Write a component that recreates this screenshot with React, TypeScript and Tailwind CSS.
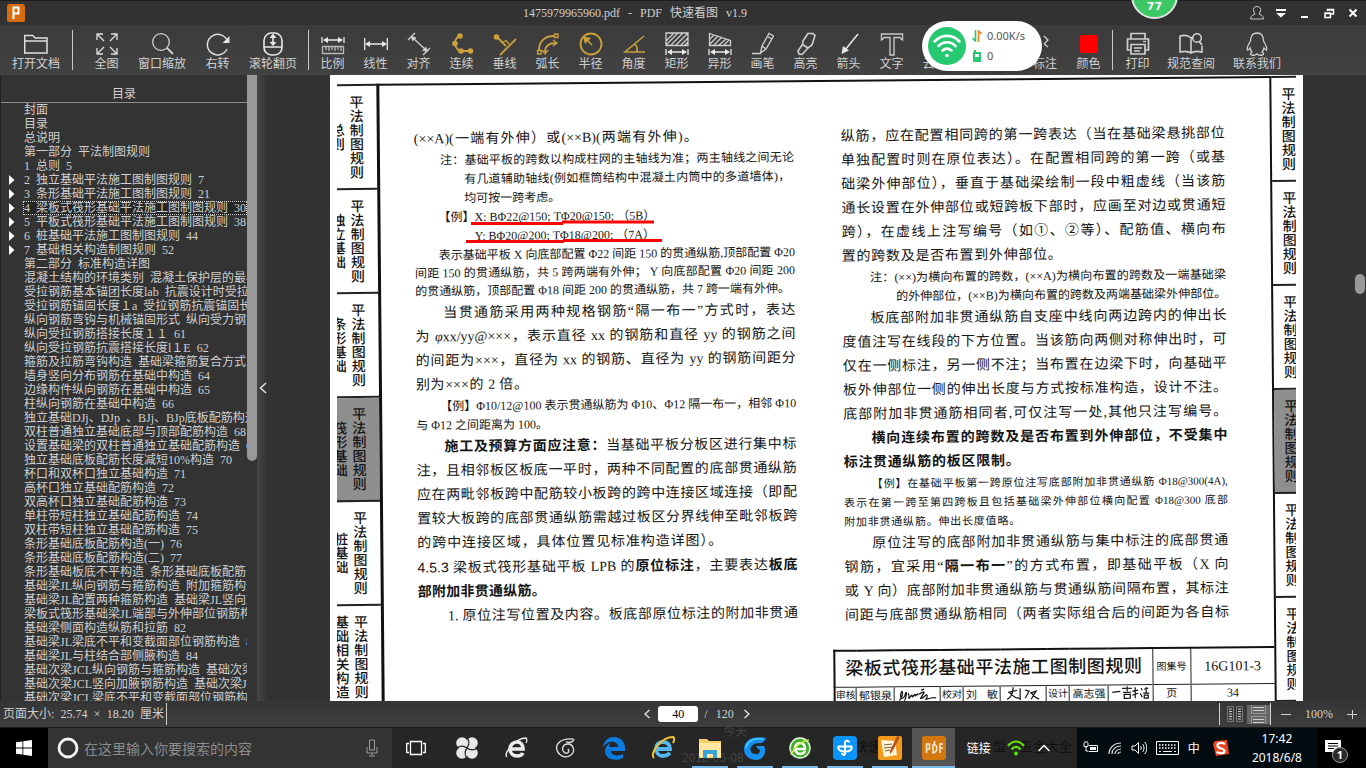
import type { ReactNode } from 'react';
import { clsx } from 'clsx';

const uiFont = "font-['Liberation_Serif','Noto_Sans_CJK_SC',sans-serif]";
const gold = '#c9a03c';

function Glyph({ children, color = '#d0d0d0' }: { children: ReactNode; color?: string }) {
  return (
    <svg className="h-6 w-6 shrink-0" viewBox="0 0 24 24" fill="none" stroke={color} strokeWidth={1.3} aria-hidden>
      {children}
    </svg>
  );
}

const dimension = (y: number) => (
  <>
    <path d={`M1 ${y - 3}v6M23 ${y - 3}v6M3 ${y}h18`} stroke="#e8e8e8" />
    <path d={`M2 ${y}l5-3v6zM22 ${y}l-5-3v6z`} fill="#e8e8e8" stroke="none" />
  </>
);

type Tool = { label: string; icon: ReactNode; wide?: boolean };

const viewTools: Tool[] = [
  {
    label: '全图',
    icon: (
      <Glyph color="#e0e0e0">
        <path d="M2 8V2h6M16 2h6v6M22 16v6h-6M8 22H2v-6M3 3l6 6M21 3l-6 6M21 21l-6-6M3 21l6-6" />
      </Glyph>
    ),
  },
  {
    label: '窗口缩放',
    wide: true,
    icon: (
      <Glyph>
        <circle cx="11" cy="10" r="8.3" />
        <path d="M17 16l6 6" strokeWidth={1.8} />
      </Glyph>
    ),
  },
  {
    label: '右转',
    icon: (
      <Glyph color="#e0e0e0">
        <path d="M21.5 9.5A10.3 10.3 0 1 0 21 17" strokeWidth={1.5} />
        <path d="M23.500 4v7h-7z" fill="#e0e0e0" stroke="none" />
      </Glyph>
    ),
  },
  {
    label: '滚轮翻页',
    wide: true,
    icon: (
      <Glyph color="#e8e8e8">
        <rect x="3" y="1" width="18" height="22" rx="7.500" strokeWidth={1.6} />
        <path d="M3 15h18M12 4v9" strokeWidth={1.6} />
        <path d="M12 1.500l3.500 4.500h-7zM12 14l3.500-4h-7z" fill="#e8e8e8" stroke="none" />
      </Glyph>
    ),
  },
];

const drawTools: Tool[] = [
  {
    label: '比例',
    icon: (
      <Glyph color="#b8b8b8">
        {dimension(8)}
        <path d="M1.500 14.500h21v7h-21zM5 15v3M8 15v4M11 15v3M14 15v4M17 15v3M20 15v4" />
      </Glyph>
    ),
  },
  {
    label: '线性',
    icon: (
      <Glyph color="#e8e8e8">
        <path d="M.700 6v12M23.300 6v12M2 12h20" />
        <path d="M1 12l5-3v6zM23 12l-5-3v6z" fill="#e8e8e8" stroke="none" />
      </Glyph>
    ),
  },
  {
    label: '对齐',
    icon: (
      <Glyph>
        <path d="M1 8l7-7M16 23l7-7M5 5l15 14" />
        <path d="M3.500 4l6 1.500-4 4zM21 20l-6-1.500 4-4z" fill="#d0d0d0" stroke="none" />
      </Glyph>
    ),
  },
  {
    label: '连续',
    icon: (
      <Glyph color={gold}>
        <path d="M9 4C4 8 3 13 9 19h11" strokeWidth={1.8} />
        <g fill={gold} stroke="none">
          <circle cx="10" cy="4" r="2.800" />
          <circle cx="5" cy="11.500" r="2.800" />
          <circle cx="11" cy="19" r="2.800" />
          <circle cx="20.500" cy="19" r="2.800" />
        </g>
      </Glyph>
    ),
  },
  {
    label: '垂线',
    icon: (
      <Glyph color={gold}>
        <path d="M4 5l9 9M7 23L23 7" strokeWidth={1.8} />
        <path d="M9 10.500l4-2 3 3.500" />
        <circle cx="3.500" cy="5" r="2.800" fill={gold} stroke="none" />
      </Glyph>
    ),
  },
  {
    label: '弧长',
    icon: (
      <Glyph color={gold}>
        <path d="M3 18C3 9 9 4 18 4M9 20c0-6 4-9 11-9" strokeWidth={1.800} />
        <path d="M1.500 18.500h3.500v3.500H1.500zM18.500 2H22v3.500h-3.500zM6 18l3 4 3-4M17 8l4 3-4 3" />
      </Glyph>
    ),
  },
  {
    label: '半径',
    icon: (
      <Glyph color={gold}>
        <circle cx="12" cy="12" r="10.500" strokeWidth={1.8} />
        <path d="M13 13L6 6" strokeWidth={1.6} />
        <path d="M4 4.500l8 1.500-6 6z" fill={gold} stroke="none" />
      </Glyph>
    ),
  },
  {
    label: '角度',
    icon: (
      <Glyph color={gold}>
        <path d="M22 4L3 20h20M13 12c2 2 2.500 5 2 8" strokeWidth={1.600} />
      </Glyph>
    ),
  },
  {
    label: '矩形',
    icon: (
      <Glyph>
        <path d="M1 1h22v12.500H1zM1 9l8-8M1 13l12-12M6 13L18 1M11 13L23 1M16 13l7-7M20 13l3-3" />
        {dimension(20)}
      </Glyph>
    ),
  },
  {
    label: '异形',
    icon: (
      <Glyph>
        <path d="M1.500 1.500l21 7v5h-21zM2 7l4-4M2 12l8-8M6 13l8-8M11 13l7-6M16 13l5-5" />
        {dimension(20)}
      </Glyph>
    ),
  },
  {
    label: '画笔',
    icon: (
      <Glyph>
        <path d="M1 21.500h9M9.500 21l1.500-7L18 1.500l4.500 2.500-7.500 13zM11 14l4 3M16.500 4.500l4.500 2.500" />
      </Glyph>
    ),
  },
  {
    label: '高亮',
    icon: (
      <Glyph>
        <path d="M9 9l5-7.500h5l2 2-3 9.500-4 3-5.500-3.500zM8.500 12.500L4 19l1 3 3 .500 6-6.500" strokeWidth={1.600} />
      </Glyph>
    ),
  },
  {
    label: '箭头',
    icon: (
      <Glyph color="#e8e8e8">
        <path d="M21 2L8 18" strokeWidth={1.600} />
        <path d="M4.500 22l1.500-8 6 4.500z" fill="#e8e8e8" stroke="none" />
      </Glyph>
    ),
  },
  {
    label: '文字',
    icon: (
      <Glyph color="#c8c8c8">
        <path d="M1.500 2h21v6l-3-2.500h-5.500V23h-4V5.500H4.500L1.500 8z" strokeWidth={1.400} />
      </Glyph>
    ),
  },
  {
    label: '云线',
    icon: (
      <Glyph>
        <path d="M6 18a4 4 0 0 1 0-8 6 6 0 0 1 11-1 5 5 0 0 1 1 9z" />
      </Glyph>
    ),
  },
];

const helpTools: Tool[] = [
  {
    label: '打印',
    icon: (
      <Glyph>
        <path d="M5 7V1.500h14V7M5 18H1.500V7h21v11H19M5 12.500h14V22H5zM8 16h8M8 19h6" strokeWidth={1.700} />
        <path d="M17 9.500h3" />
      </Glyph>
    ),
  },
  {
    label: '规范查阅',
    wide: true,
    icon: (
      <Glyph>
        <path d="M12 6C9 3 5 3 1 4v16c4-1 8-1 11 1 3-2 7-2 11-1v-6M12 6v15M12 6l2-1" strokeWidth={1.600} />
        <circle cx="18" cy="6" r="4.300" strokeWidth={1.600} />
        <path d="M20 9l3 4" strokeWidth={1.800} />
      </Glyph>
    ),
  },
  {
    label: '联系我们',
    wide: true,
    icon: (
      <Glyph>
        <path d="M12 1C7 1 5.500 5 5.500 9 3 13 1.500 16 2.500 18c1 0 2-1 2.500-2 .500 2 1 3 2 4-2 1-2 3 0 3 2 .500 4 0 5-1 1 1 3 1.500 5 1 2 0 2-2 0-3 1-1 1.500-2 2-4 .500 1 1.500 2 2.500 2 1-2-.500-5-3-9 0-4-1.500-8-6.500-8z" />
      </Glyph>
    ),
  },
];

function ToolButton({ label, icon, wide }: Tool) {
  return (
    <button
      type="button"
      className={clsx(
        'flex shrink-0 flex-col items-center gap-px text-[12px] leading-[14px] whitespace-nowrap text-[#d0d0d0]',
        wide ? 'w-14' : 'w-[43px]',
      )}
    >
      {icon}
      <span>{label}</span>
    </button>
  );
}

function Divider() {
  return <span className="-mt-0.5 h-10 w-px shrink-0 bg-[#c8c8c8]" />;
}

function TitleBar() {
  return (
    <header className="flex h-[25px] shrink-0 items-center border-t border-[#1c1c1c] bg-[#323232] text-[12px] text-[#d0d0d0]">
      <svg className="ml-[7px] h-[18px] w-[18px]" viewBox="0 0 18 18" aria-hidden>
        <rect width="18" height="18" rx="2.500" fill="#d96c0c" />
        <path d="M6.500 15V3.500h5v6h-4" fill="none" stroke="#fff" strokeWidth="2" />
      </svg>
      <h1 className="flex flex-1 justify-center gap-2 pr-1">
        <span>1475979965960.pdf</span>
        <span>-</span>
        <span>PDF</span>
        <span>快速看图</span>
        <span>v1.9</span>
      </h1>
      <div className="flex items-center gap-2 pr-[5px] text-white">
        <button type="button" aria-label="账户">
          <svg className="h-4 w-4" viewBox="0 0 16 16" fill="none" stroke="#c8c8c8" aria-hidden>
            <path d="M8 1.500c-3 0-4 2-3.500 4.500L6 9c-3 1-4.500 3-4.500 5h13c0-2-1.500-4-4.500-5l1.500-3C12 3.500 11 1.500 8 1.500z" />
          </svg>
        </button>
        <button type="button" aria-label="菜单">
          <svg className="h-4 w-4" viewBox="0 0 16 16" fill="#fff" aria-hidden>
            <path d="M3 4h10v2H3zM3 8h10l-5 4.500z" />
          </svg>
        </button>
        <button type="button" aria-label="最小化">
          <svg className="h-4 w-4" viewBox="0 0 16 16" fill="#fff" aria-hidden>
            <path d="M4 11h7v2H4z" />
          </svg>
        </button>
        <button type="button" aria-label="还原">
          <svg className="h-4 w-4" viewBox="0 0 16 16" fill="none" stroke="#fff" strokeWidth={1.500} aria-hidden>
            <path d="M6.500 6V4.500h6V9H10M4 8h5.500v4.500H4zM4 8.500h5.500M6.500 5h6" />
          </svg>
        </button>
        <button type="button" aria-label="关闭">
          <svg className="h-4 w-4" viewBox="0 0 16 16" fill="none" stroke="#fff" strokeWidth={2} aria-hidden>
            <path d="M4.500 4.500l7 7M11.500 4.500l-7 7" />
          </svg>
        </button>
      </div>
    </header>
  );
}

function Toolbar() {
  return (
    <nav className="flex h-[50px] shrink-0 items-start overflow-hidden bg-linear-to-b from-[#3b3b3b] to-[#424242] pt-[7px]">
      <div className="flex pr-2 pl-2">
        <ToolButton
          wide
          label="打开文档"
          icon={
            <Glyph color="#e0e0e0">
              <path d="M.700 21V3.500h8l2.500 2.500H23V21zM.700 9H23" strokeWidth={1.500} />
            </Glyph>
          }
        />
      </div>
      <Divider />
      <div className="flex gap-1.5 pr-[7px] pl-3">
        {viewTools.map((t) => (
          <ToolButton key={t.label} {...t} />
        ))}
      </div>
      <Divider />
      <div className="flex pr-12 pl-0.5">
        {drawTools.map((t) => (
          <ToolButton key={t.label} {...t} />
        ))}
      </div>
      <div className="flex gap-1 pr-0.5">
        <button
          type="button"
          className="flex w-[59px] flex-col items-end gap-px text-[12px] leading-[14px] text-[#d0d0d0]"
        >
          <Glyph>
            <path d="M5 4l4 4-4 4M5 12l4 3" />
          </Glyph>
          <span className="pr-1.5">标注</span>
        </button>
        <ToolButton
          label="颜色"
          icon={
            <Glyph>
              <rect x="3" y="3" width="18" height="18" rx="2" fill="#f00" stroke="none" />
            </Glyph>
          }
        />
      </div>
      <Divider />
      <div className="flex gap-1 pl-[3px]">
        <ToolButton {...helpTools[0]} />
        <ToolButton {...helpTools[1]} />
        <span className="w-0.5" />
        <ToolButton {...helpTools[2]} />
      </div>
    </nav>
  );
}

const outline: { text: string; branch?: boolean; active?: boolean }[] = [
  { text: '封面' },
  { text: '目录' },
  { text: '总说明' },
  { text: '第一部分 平法制图规则' },
  { text: '1 总则 5' },
  { text: '2 独立基础平法施工图制图规则 7', branch: true },
  { text: '3 条形基础平法施工图制图规则 21', branch: true },
  { text: '4 梁板式筏形基础平法施工图制图规则 30', branch: true, active: true },
  { text: '5 平板式筏形基础平法施工图制图规则 38', branch: true },
  { text: '6 桩基础平法施工图制图规则 44', branch: true },
  { text: '7 基础相关构造制图规则 52', branch: true },
  { text: '第二部分 标准构造详图' },
  { text: '混凝土结构的环境类别 混凝土保护层的最小厚度' },
  { text: '受拉钢筋基本锚团长度lab 抗震设计时受拉钢筋' },
  { text: '受拉钢筋锚固长度１a 受拉钢筋抗震锚固长度' },
  { text: '纵向钢筋弯钩与机械锚固形式 纵向受力钢筋' },
  { text: '纵向受拉钢筋搭接长度１１ 61' },
  { text: '纵向受拉钢筋抗震搭接长度l１E 62' },
  { text: '箍筋及拉筋弯钩构造 基础梁箍筋复合方式 63' },
  { text: '墙身竖向分布钢筋在基础中构造 64' },
  { text: '边缘构件纵向钢筋在基础中构造 65' },
  { text: '柱纵向钢筋在基础中构造 66' },
  { text: '独立基础DJj、DJp 、BJj、BJp底板配筋构造' },
  { text: '双柱普通独立基础底部与顶部配筋构造 68' },
  { text: '设置基础梁的双柱普通独立基础配筋构造 69' },
  { text: '独立基础底板配筋长度减短10%构造 70' },
  { text: '杯口和双杯口独立基础构造 71' },
  { text: '高杯口独立基础配筋构造 72' },
  { text: '双高杯口独立基础配筋构造 73' },
  { text: '单柱带短柱独立基础配筋构造 74' },
  { text: '双柱带短柱独立基础配筋构造 75' },
  { text: '条形基础底板配筋构造(一) 76' },
  { text: '条形基础底板配筋构造(二) 77' },
  { text: '条形基础板底不平构造 条形基础底板配筋长度' },
  { text: '基础梁JL纵向钢筋与箍筋构造 附加箍筋构造' },
  { text: '基础梁JL配置两种箍筋构造 基础梁JL竖向加腋' },
  { text: '梁板式筏形基础梁JL端部与外伸部位钢筋构造' },
  { text: '基础梁侧面构造纵筋和拉筋 82' },
  { text: '基础梁JL梁底不平和变截面部位钢筋构造 83' },
  { text: '基础梁JL与柱结合部侧腋构造 84' },
  { text: '基础次梁JCL纵向钢筋与箍筋构造 基础次梁JCL' },
  { text: '基础次梁JCL竖向加腋钢筋构造 基础次梁JCL' },
  { text: '基础次梁JCL梁底不平和变截面部位钢筋构造' },
];

function Sidebar() {
  return (
    <aside className="flex w-[267px] shrink-0 overflow-hidden border-l border-[#222]">
      <div className="flex min-w-0 flex-1 flex-col text-[12px] text-[#d0d0d0]">
        <h2 className="h-7 shrink-0 border-b border-[#8a8a8a] pt-[11px] text-center leading-4">目录</h2>
        <ul>
          {outline.map(({ text, branch, active }) => (
            <li key={text} className="flex h-3.5 items-center pl-2">
              <span className="flex w-3.5 shrink-0">
                {branch && (
                  <svg className="h-2.5 w-1.5" viewBox="0 0 6 10" fill="#fff" aria-hidden>
                    <path d="M0 0l5.500 5L0 10z" />
                  </svg>
                )}
              </span>
              <button
                type="button"
                className={clsx(
                  'flex h-3.5 min-w-0 items-center gap-1.5 overflow-hidden pl-px leading-3.5 whitespace-nowrap',
                  active && 'flex-1 bg-[#262626] outline-1 -outline-offset-1 outline-[#d0d0d0] outline-dotted',
                )}
              >
                {text.split(' ').map((part, i) => (
                  <span key={i}>{part}</span>
                ))}
              </button>
            </li>
          ))}
        </ul>
      </div>
      <div className="w-2.5 shrink-0">
        <div className="h-[386px] rounded-b-full bg-[#999]" />
      </div>
      <div className="flex w-2.5 shrink-0 items-center bg-linear-to-r from-[#464646] to-[#333]">
        <button type="button" aria-label="收起目录" className="pl-0.5">
          <svg className="h-3 w-2" viewBox="0 0 8 12" fill="none" stroke="#e0e0e0" strokeWidth={1.500} aria-hidden>
            <path d="M7 1L1.500 6 7 11" />
          </svg>
        </button>
      </div>
    </aside>
  );
}

const lineSizes = {
  body: 'text-[14px] leading-6',
  note: 'text-[12px] leading-[19px]',
  example: 'text-[11px] leading-[19px]',
  tight: 'text-[12px] leading-[18px]',
};

function Line({
  size = 'body',
  className,
  children,
}: {
  size?: keyof typeof lineSizes;
  className?: string;
  children: ReactNode;
}) {
  return (
    <p className={clsx('whitespace-nowrap [text-align-last:justify]', lineSizes[size], className)}>{children}</p>
  );
}

function LeftColumn() {
  return (
    <div className="min-w-0">
      <Line className="w-[284px]">(××A)(一端有外伸）或(××B)(两端有外伸)。</Line>
      <Line size="note" className="pl-[26px]">注：基础平板的跨数以构成柱网的主轴线为准；两主轴线之间无论</Line>
      <Line size="note" className="pr-1 pl-[50px]">有几道辅助轴线(例如框筒结构中混凝土内筒中的多道墙体)，</Line>
      <Line size="note" className="w-[142px] pl-[50px]">均可按一跨考虑。</Line>
      <Line size="note" className="w-[238px] pl-6">【例】X: BΦ22@150; TΦ20@150; （5B）</Line>
      <Line size="note" className="w-[238px] pl-[60px]">Y: BΦ20@200; TΦ18@200; （7A）</Line>
      <Line size="tight" className="pl-6">表示基础平板 X 向底部配置 Φ22 间距 150 的贯通纵筋,顶部配置 Φ20</Line>
      <Line size="tight">间距 150 的贯通纵筋，共 5 跨两端有外伸； Y 向底部配置 Φ20 间距 200</Line>
      <Line size="tight" className="pr-2">的贯通纵筋，顶部配置 Φ18 间距 200 的贯通纵筋，共 7 跨一端有外伸。</Line>
      <Line className="mt-px pl-7">当贯通筋采用两种规格钢筋“隔一布一”方式时，表达</Line>
      <Line>
        为 <i>φ</i>xx/yy@×××，表示直径 xx 的钢筋和直径 yy 的钢筋之间
      </Line>
      <Line>的间距为×××，直径为 xx 的钢筋、直径为 yy 的钢筋间距分</Line>
      <Line className="w-[112px]">别为×××的 2 倍。</Line>
      <Line size="note" className="pl-6">【例】Φ10/12@100 表示贯通纵筋为 Φ10、Φ12 隔一布一，相邻 Φ10</Line>
      <Line size="note" className="w-[126px]">与 Φ12 之间距离为 100。</Line>
      <Line className="pl-7">
        <b>施工及预算方面应注意：</b>当基础平板分板区进行集中标
      </Line>
      <Line>注，且相邻板区板底一平时，两种不同配置的底部贯通纵筋</Line>
      <Line>应在两毗邻板跨中配筋较小板跨的跨中连接区域连接（即配</Line>
      <Line>置较大板跨的底部贯通纵筋需越过板区分界线伸至毗邻板跨</Line>
      <Line className="w-[305px]">的跨中连接区域，具体位置见标准构造详图）。</Line>
      <Line>
        <span className="font-['Liberation_Sans']">4.5.3</span> 梁板式筏形基础平板 LPB 的<b>原位标注</b>，主要表达
        <b>板底</b>
      </Line>
      <Line className="w-[128px]">
        <b>部附加非贯通纵筋。</b>
      </Line>
      <Line className="pl-[30px]">1. 原位注写位置及内容。板底部原位标注的附加非贯通</Line>
    </div>
  );
}

function RightColumn() {
  return (
    <div className="min-w-0 pt-px">
      <Line>纵筋，应在配置相同跨的第一跨表达（当在基础梁悬挑部位</Line>
      <Line>单独配置时则在原位表达）。在配置相同跨的第一跨（或基</Line>
      <Line>础梁外伸部位），垂直于基础梁绘制一段中粗虚线（当该筋</Line>
      <Line>通长设置在外伸部位或短跨板下部时，应画至对边或贯通短</Line>
      <Line>跨），在虚线上注写编号（如①、②等）、配筋值、横向布</Line>
      <Line className="w-[220px]">置的跨数及是否布置到外伸部位。</Line>
      <Line size="note" className="pl-7">注：(××)为横向布置的跨数，(××A)为横向布置的跨数及一端基础梁</Line>
      <Line size="note" className="pl-[54px]">的外伸部位，(××B)为横向布置的跨数及两端基础梁外伸部位。</Line>
      <Line className="pl-7">板底部附加非贯通纵筋自支座中线向两边跨内的伸出长</Line>
      <Line>度值注写在线段的下方位置。当该筋向两侧对称伸出时，可</Line>
      <Line>仅在一侧标注，另一侧不注；当布置在边梁下时，向基础平</Line>
      <Line>板外伸部位一侧的伸出长度与方式按标准构造，设计不注。</Line>
      <Line>底部附加非贯通筋相同者,可仅注写一处,其他只注写编号。</Line>
      <Line className="pl-7">
        <b>横向连续布置的跨数及是否布置到外伸部位，不受集中</b>
      </Line>
      <Line className="w-[176px]">
        <b>标注贯通纵筋的板区限制。</b>
      </Line>
      <Line size="example" className="pl-7">【例】在基础平板第一跨原位注写底部附加非贯通纵筋 Φ18@300(4A),</Line>
      <Line size="example">表示在第一跨至第四跨板且包括基础梁外伸部位横向配置 Φ18@300 底部</Line>
      <Line size="example" className="w-[176px]">附加非贯通纵筋。伸出长度值略。</Line>
      <Line className="pl-7">原位注写的底部附加非贯通纵筋与集中标注的底部贯通</Line>
      <Line>
        钢筋，宜采用“<b>隔一布一</b>”的方式布置，即基础平板（X 向
      </Line>
      <Line>或 Y 向）底部附加非贯通纵筋与贯通纵筋间隔布置，其标注</Line>
      <Line>间距与底部贯通纵筋相同（两者实际组合后的间距为各自标</Line>
    </div>
  );
}

const chapters = ['总则', '独立基础', '条形基础', '筏形基础', '桩基础', '基础相关构造'];

function ChapterTabs({ side }: { side: 'left' | 'right' }) {
  return (
    <div className={clsx('shrink-0 pt-[5px]', side === 'left' ? 'w-[50px]' : 'w-[30px]')}>
      <div className="border-t-2 border-[#222]">
        {chapters.map((chapter) => (
          <div
            key={chapter}
            className={clsx(
              'flex h-[104px] items-center gap-[5px] border-b-2 border-[#222] text-[14px] leading-3.5 font-medium',
              side === 'left' ? 'justify-end pr-[15px]' : 'pl-2',
              chapter === '筏形基础' && 'bg-[#8f8f8f]',
            )}
          >
            {side === 'left' && <span className="shrink-0 whitespace-nowrap [writing-mode:vertical-rl]">{chapter}</span>}
            <span className="shrink-0 whitespace-nowrap [writing-mode:vertical-rl]">平法制图规则</span>
          </div>
        ))}
      </div>
    </div>
  );
}

function Signature({ d }: { d: string }) {
  return (
    <svg className="h-4 w-full" viewBox="0 0 40 16" fill="none" stroke="#111" strokeWidth={1.200} aria-hidden>
      <path d={d} />
    </svg>
  );
}

const cell = 'border-l border-[#222] p-0 text-center whitespace-nowrap';

function TitleBlock() {
  return (
    <table className="mt-[22px] ml-auto w-[440px] table-fixed border-collapse border-t-2 border-l-2 border-[#111]">
      <colgroup>
        <col className="w-[22px]" />
        <col className="w-[38px]" />
        <col className="w-[46px]" />
        <col className="w-[23px]" />
        <col className="w-[37px]" />
        <col className="w-[46px]" />
        <col className="w-[23px]" />
        <col className="w-[39px]" />
        <col className="w-[44px]" />
        <col className="w-[38px]" />
        <col className="w-[84px]" />
      </colgroup>
      <tbody>
        <tr className="h-9 border-b border-[#222]">
          <td colSpan={9} className="pr-2.5 pl-2.5 text-[18px] font-medium whitespace-nowrap [text-align-last:justify]">
            梁板式筏形基础平法施工图制图规则
          </td>
          <td className={clsx(cell, 'text-[10px]')}>图集号</td>
          <td className={clsx(cell, 'text-[14px]')}>16G101-3</td>
        </tr>
        <tr className="h-[18px] text-[11px] leading-4">
          <td className="p-0 text-center text-[10px] whitespace-nowrap">审核</td>
          <td className={cell}>郁银泉</td>
          <td className={cell}>
            <Signature d="M2 13c3-1 4-9 3-9s-3 7 0 7 3-6 4-6-1 9-2 8M11 6c2 3 0 6 1 5s3-5 3-2 3-4 3-1 3-4 3 0M24 3l3-1M22 7c5-3 6-3 4 0s-4 6-1 4 5-5 5-2-3 4 0 3 7-2 9-1" />
          </td>
          <td className={clsx(cell, 'text-[10px]')}>校对</td>
          <td className={clsx(cell, 'px-0.5 [text-align-last:justify]')}>刘 敏</td>
          <td className={cell}>
            <Signature d="M5 6l9-2M10 1c0 6-2 10-6 12M6 6c3 3 5 5 8 6M17 2v11l-3-2M22 4l4 1-4 7M27 7l6-2-5 8M28 6c2 4 5 6 8 7" />
          </td>
          <td className={clsx(cell, 'text-[10px]')}>设计</td>
          <td className={cell}>高志强</td>
          <td className={cell}>
            <Signature d="M2 7l8-1M12 3h10M17 1v5M13 7h8M14 9h6v4h-6zM22 6l6-1M25 2v11M22 10l6-2M31 3l1 2M30 8l2 4M34 4l4-1M36 2v6M33 8h6M34 10h4v3h-4z" />
          </td>
          <td className={clsx(cell, 'text-[11px]')}>页</td>
          <td className={clsx(cell, 'text-[12px]')}>34</td>
        </tr>
      </tbody>
    </table>
  );
}

function Viewer() {
  return (
    <main className="relative flex min-w-0 flex-1 justify-center overflow-hidden bg-[#323232]">
      <article className="relative w-[973px] shrink-0 overflow-hidden bg-white px-[7px] font-['Liberation_Serif','Noto_Sans_CJK_SC',serif] text-[#151515]">
        <div className="h-full overflow-hidden">
          <div className="-mx-2 flex -rotate-[0.5deg]">
            <ChapterTabs side="left" />
            <div className="mt-[5px] min-w-0 flex-1 border-t-2 border-r-2 border-l-3 border-[#111] pt-[42px]">
              <div className="grid grid-cols-[381fr_385fr] gap-[47px] pr-[45px] pl-[34px]">
                <LeftColumn />
                <RightColumn />
              </div>
              <TitleBlock />
            </div>
            <ChapterTabs side="right" />
          </div>
        </div>
        {/* underline annotations drawn on top of the sheet */}
        <svg className="absolute top-0 left-0 h-[200px] w-[400px]" fill="none" stroke="#f00" strokeWidth={3} aria-hidden>
          <path d="M141 148.500h92M232 147h92M136 166.500h98M233 165.500h99" />
        </svg>
      </article>
      <div className="absolute top-[199px] right-px h-5 w-2.5 rounded-full bg-[#999]" />
    </main>
  );
}

function StatusBar() {
  return (
    <footer className="flex h-[27px] shrink-0 items-center border-b border-[#1c1c1c] bg-linear-to-b from-[#353535] to-[#3e3e3e] text-[12px] text-[#d0d0d0]">
      <div className="flex flex-1 items-center">
        <span className="flex h-[22px] w-[167px] items-center justify-between border-r border-[#d0d0d0] pr-0.5 pl-[3px]">
          <span>页面大小:</span>
          <span>25.74</span>
          <span>×</span>
          <span>18.20</span>
          <span>厘米</span>
        </span>
      </div>
      <div className="flex items-center gap-1.5 pl-7">
        <button type="button" aria-label="上一页" className="pr-0.5">
          <svg className="h-2.5 w-1.5" viewBox="0 0 6 10" fill="none" stroke="#e0e0e0" strokeWidth={1.500} aria-hidden>
            <path d="M5.500 1L1 5l4.500 4" />
          </svg>
        </button>
        <input
          aria-label="页码"
          defaultValue="40"
          className="h-4 w-10 rounded-[3px] bg-white text-center text-[12px] text-black"
        />
        <span className="flex gap-2">
          <span>/</span>
          <span>120</span>
        </span>
        <button type="button" aria-label="下一页" className="pl-1">
          <svg className="h-2.5 w-1.5" viewBox="0 0 6 10" fill="none" stroke="#e0e0e0" strokeWidth={1.500} aria-hidden>
            <path d="M.500 1L5 5 .500 9" />
          </svg>
        </button>
      </div>
      <div className="flex flex-1 items-center justify-end">
        <div className="mr-2.5 flex h-[22px] items-center gap-1 border-x border-[#d0d0d0] pl-[7px]">
          <button type="button" aria-label="双页">
            <svg className="h-4 w-4" viewBox="0 0 16 16" fill="none" stroke="#777" aria-hidden>
              <path d="M.500.500h6v15h-6zM9.500.500h6v15h-6z" />
              <path d="M2 3h3M2 5.500h3M2 8h3M2 10.500h3M2 13h3M11 3h3M11 5.500h3M11 8h3M11 10.500h3M11 13h3" stroke="#ccc" />
            </svg>
          </button>
          <button type="button" aria-label="连续页" className="bg-[#666]">
            <svg className="h-[19px] w-[23px]" viewBox="0 0 23 19" fill="none" stroke="#999" aria-hidden>
              <path d="M4.500 0v8.500h14V0M4.500 19v-7.500h14V19" />
              <path d="M6 2.500h11M6 5.500h11M6 14.500h11M6 17.500h11" stroke="#d0d0d0" />
            </svg>
          </button>
        </div>
        <button type="button" aria-label="缩小" className="mr-3.5">
          <svg className="h-2.5 w-2.5" viewBox="0 0 10 10" stroke="#d0d0d0" aria-hidden>
            <path d="M0 5.500h10" />
          </svg>
        </button>
        <span className="mr-3.5">100%</span>
        <button type="button" aria-label="放大" className="mr-[9px]">
          <svg className="h-2.5 w-2.5" viewBox="0 0 10 10" stroke="#d0d0d0" aria-hidden>
            <path d="M0 5.500h10M5.500 1v9" />
          </svg>
        </button>
      </div>
    </footer>
  );
}

const plainApps = [
  {
    name: '四叶草',
    icon: (
      <svg className="h-6 w-6" viewBox="0 0 24 24" fill="#e8e8e8" aria-hidden>
        <circle cx="7" cy="7" r="5.800" />
        <circle cx="17" cy="7" r="5.800" />
        <circle cx="7" cy="17" r="5.800" />
        <circle cx="17" cy="17" r="5.800" />
        <path d="M8 8h8v8H8z" />
        <path
          d="M12 12C8 9 4 10 1 12.500M12 12c4 3 8 2 11-.500M12 12c3-4 2-8-.500-11M12 12c-3 4-2 8 .500 11"
          fill="none"
          stroke="#262626"
          strokeWidth="1.300"
        />
      </svg>
    ),
  },
  {
    name: '浏览器',
    icon: (
      <svg className="h-6 w-6" viewBox="0 0 24 24" fill="none" stroke="#ececec" aria-hidden>
        <path d="M6 13h13c0-4-2-7-6-7s-7 3-7 7 3 7 7 7c3 0 5-1 6-3" strokeWidth="3.600" />
        <path d="M3 21C-1 17 12 2 22 2c1 1 1 3 0 5" strokeWidth="1.300" />
      </svg>
    ),
  },
  {
    name: '广联达',
    icon: (
      <svg className="h-6 w-6" viewBox="0 0 24 24" fill="none" stroke="#d8d8d8" strokeWidth="1.400" aria-hidden>
        <path d="M20 3C8 2 2 8 4 14s9 9 14 5 2-11-3-11-7 5-4 8 6 0 4-3M21 3c-1 3-4 4-8 3" />
      </svg>
    ),
  },
  {
    name: 'Edge',
    icon: (
      <svg className="h-6 w-6" viewBox="0 0 24 24" fill="#0a7be0" aria-hidden>
        <path d="M1 11C2 4 7 1 12 1c7 0 11 5 11 11v3H9c0 4 5 6 12 3v4c-8 4-18 1-18-7 0-4 3-7 6-8-1 1-2 2-2 4h9c0-7-11-7-15 0z" />
      </svg>
    ),
  },
  {
    name: 'IE',
    icon: (
      <svg className="h-6 w-6" viewBox="0 0 24 24" fill="none" aria-hidden>
        <path d="M5 13h14c0-4-2-7-7-7s-7 3-7 7 3 7 7 7c3 0 5-1 7-3" stroke="#52b8f0" strokeWidth="3.800" />
        <path d="M3 22C-2 17 11 1 22 1c2 1 1 4 0 6" stroke="#f2c230" strokeWidth="2" />
      </svg>
    ),
  },
];

const runningApps = [
  {
    name: '文件资源管理器',
    icon: (
      <svg className="h-6 w-6" viewBox="0 0 24 24" aria-hidden>
        <path d="M1 3h8l2 2h12v17H1z" fill="#f5d06c" />
        <path d="M1 7h22v14H1z" fill="#ffe7a0" />
        <path d="M5 22v-8h14v8h-4v-4H9v4z" fill="#35a5dc" />
      </svg>
    ),
  },
  {
    name: '广联达造价',
    icon: (
      <svg className="h-6 w-6" viewBox="0 0 24 24" aria-hidden>
        <path d="M23 2C10-1 1 4 1 13c0 7 6 11 12 11 8 0 11-9 8-14h-8l2 3c4 1 1 6-3 5C4 17 7 6 17 7c3 0 5-2 6-5z" fill="#1590f0" />
        <path d="M20 3C9 2 4 6 3 12" fill="none" stroke="#4ccaff" strokeWidth="1.500" />
      </svg>
    ),
  },
  {
    name: '360浏览器',
    icon: (
      <svg className="h-6 w-6" viewBox="0 0 24 24" fill="none" aria-hidden>
        <circle cx="12" cy="12" r="10" fill="#3cae28" stroke="#e8f8e0" strokeWidth="1.500" />
        <path d="M7 13h10c0-4-2-6-5-6s-5 2-5 5 2 6 5 6c2 0 4-1 5-3" stroke="#fff" strokeWidth="2.500" />
        <path d="M3 19C6 11 13 5 21 4" stroke="#c8f050" strokeWidth="1.500" />
      </svg>
    ),
  },
  {
    name: '快速看图',
    icon: (
      <svg className="h-6 w-6" viewBox="0 0 24 24" fill="none" aria-hidden>
        <rect width="24" height="24" rx="4" fill="#0a94f5" />
        <path d="M12 19V7c0-3 4-3 4-.500M5 10.500h14M5 10.500c0 4 3 5 7 5s7-1 7-5M12 19c-2 0-3-1-3-2" stroke="#fff" strokeWidth="2" />
      </svg>
    ),
  },
  {
    name: '记事本',
    icon: (
      <svg className="h-6 w-6" viewBox="0 0 24 24" aria-hidden>
        <rect width="24" height="24" rx="2" fill="#f39a1c" />
        <path d="M3 4l14 1 2 14-13 2z" fill="#fff6dc" />
        <path d="M6 9l8-1M6 12l9-1M7 15l5-1" stroke="#7a5c30" />
        <path d="M22 1l-8 15-2 2v-3L19 0z" fill="#b5551c" />
      </svg>
    ),
  },
];

function Taskbar() {
  return (
    <nav className="relative flex h-10 shrink-0 bg-[#262626] text-[12px] text-white">
      <button type="button" aria-label="开始" className="flex w-12 items-center justify-center bg-black">
        <svg className="h-4 w-4" viewBox="0 0 16 16" fill="#fff" aria-hidden>
          <path d="M0 2.300L6.500 1.400v6.200H0zM7.300 1.300L16 0v7.600H7.300zM0 8.400h6.500v6.200L0 13.700zM7.300 8.400H16V16l-8.700-1.300z" />
        </svg>
      </button>
      <label className="flex w-[344px] items-center bg-[#333] pr-3 pl-[9px]">
        <svg className="h-[22px] w-[22px] shrink-0" viewBox="0 0 22 22" fill="none" aria-hidden>
          <circle cx="11" cy="11" r="9" stroke="#f4f4f4" strokeWidth="2.800" />
        </svg>
        <input
          aria-label="搜索"
          placeholder="在这里输入你要搜索的内容"
          className="ml-[5px] min-w-0 flex-1 font-['Noto_Sans_CJK_SC',sans-serif] text-[14px] placeholder:text-[#8c8c8c]"
        />
        <svg className="h-[18px] w-4" viewBox="0 0 16 18" fill="none" stroke="#9a9a9a" aria-hidden>
          <path d="M5.500 1h5v10h-5zM3 8v6h10V8M8 14v3M5 17h6" />
        </svg>
      </label>
      <button type="button" aria-label="任务视图" className="flex w-12 items-center justify-center">
        <svg className="h-4 w-5" viewBox="0 0 20 16" fill="none" stroke="#fff" strokeWidth="1.300" aria-hidden>
          <path d="M4.500 1.500h11v13h-11zM3 3.500H.700v9H3M17 3.500h2.300v9H17" />
        </svg>
      </button>

      {/* desktop text that shows through the translucent bar */}
      <div className="absolute inset-0 left-[682px] font-['Noto_Sans_CJK_SC',sans-serif] text-[#111]" aria-hidden>
        <span className="absolute -top-1.5 left-[41px] text-[#444]">今天</span>
        <span className="absolute top-5 left-0 text-[#444]">2018-05-08</span>
        <span className="absolute top-2 left-[173px] text-[13px]">快速</span>
        <span className="absolute top-2 left-[311px] text-[13px]">型</span>
        <span className="absolute top-2 left-[338px] text-[13px]">五金大全</span>
      </div>

      <div className="relative flex pl-0.5">
        {plainApps.map((app) => (
          <button key={app.name} type="button" aria-label={app.name} className="flex w-[49px] items-center justify-center">
            {app.icon}
          </button>
        ))}
      </div>
      <div className="relative flex">
        {runningApps.map((app) => (
          <button key={app.name} type="button" aria-label={app.name} className="flex w-[45px] flex-col items-center pt-2">
            {app.icon}
            <span className="mt-auto h-0.5 w-9 bg-[#76b9ed]" />
          </button>
        ))}
        <button type="button" aria-label="PDF快速看图" className="flex w-[43px] flex-col items-center bg-[#555] pt-2">
          <svg className="h-6 w-6" viewBox="0 0 24 24" fill="none" aria-hidden>
            <rect width="24" height="24" rx="3" fill="#d4770e" />
            <path d="M4.500 17V8h3v5h-3M11 8v9c5-1 5-8 0-9M12.500 5v3M18 17V8h3M18 12h3" stroke="#f4e6d4" strokeWidth="1.600" />
          </svg>
          <span className="mt-auto h-0.5 w-full bg-[#76b9ed]" />
        </button>
      </div>

      <div className="relative ml-auto flex">
        <div className="flex items-center gap-4 pr-[26px]">
          <span className="font-['Noto_Sans_CJK_SC',sans-serif]">链接</span>
          <svg className="h-4 w-[18px]" viewBox="0 0 18 16" fill="none" stroke="#5fe600" strokeWidth="2.200" aria-hidden>
            <path d="M1 6c5-6 11-6 16 0M4.500 9.500c3-3.500 6-3.500 9 0" />
            <circle cx="9" cy="13.500" r="2" fill="#5fe600" stroke="none" />
          </svg>
          <svg className="-ml-1 h-2 w-3.5" viewBox="0 0 14 8" fill="none" stroke="#fff" strokeWidth="1.500" aria-hidden>
            <path d="M1.500 7L7 1.500 12.500 7" />
          </svg>
        </div>
        <div className="flex items-center gap-[9px] bg-[#020b10] pr-4 pl-1.5">
          <svg className="h-4 w-4" viewBox="0 0 16 16" fill="none" stroke="#fff" aria-hidden>
            <path d="M6 5.500h8.500v6H5.500M1 3v3.500h4V3M2 1v2M4 1v2M3 6.500V11h2" />
            <path d="M7 7h6v3H7z" fill="#fff" stroke="none" />
          </svg>
          <svg className="h-4 w-3.5" viewBox="0 0 14 16" fill="none" stroke="#ddd" strokeWidth="1.200" aria-hidden>
            <path d="M1 14C1 8 6 3 13 3M4 14c0-5 4-8 9-8M7 14c0-3 3-5 6-5M10 14c0-1 1-2 3-2" />
          </svg>
          <svg className="h-4 w-4" viewBox="0 0 16 16" fill="none" stroke="#fff" aria-hidden>
            <path d="M1 6h3l3.500-3.500v11L4 10H1zM9.500 6c1 1 1 3 0 4M11.500 4c2 2 2 6 0 8M13.500 2c3 3 3 9 0 12" />
          </svg>
          <svg className="h-3.5 w-[23px]" viewBox="0 0 23 14" fill="none" stroke="#fff" aria-hidden>
            <path d="M.500.500h22v13H.500z" />
            <path d="M3 4h17M3 7h17" strokeDasharray="1.500 1.500" strokeWidth="1.500" />
            <path d="M3 10.500h2M7 10.500h9M18 10.500h2" />
          </svg>
          <span className="font-['Noto_Sans_CJK_SC',sans-serif]">中</span>
          <svg className="ml-1 h-4 w-4" viewBox="0 0 16 16" fill="none" aria-hidden>
            <path d="M2 1l12-1 2 14-13 2L0 4z" fill="#f0441c" />
            <path d="M12 4C8 2 4 3 4.500 6s7 2 7 5-5 2.500-8 1" stroke="#fff" strokeWidth="2.200" />
          </svg>
          <time className="ml-3.5 text-center font-['Noto_Sans',sans-serif] leading-[19px]">
            17:42
            <br />
            2018/6/8
          </time>
        </div>
        <button type="button" aria-label="通知" className="relative flex w-12 items-center bg-black pl-[7px]">
          <svg className="h-4 w-4" viewBox="0 0 16 16" fill="#fff" aria-hidden>
            <path d="M0 0h16v12h-5v4l-4-4H0z" />
            <path d="M3 3.500h10M3 6h10M3 8.500h6" stroke="#000" />
          </svg>
          <span className="absolute top-[19px] left-3.5 flex h-4 w-4 items-center justify-center rounded-full border border-[#999] bg-[#2a2a2a] font-['Noto_Sans',sans-serif] text-[11px] font-bold">
            1
          </span>
        </button>
      </div>
    </nav>
  );
}

function NetworkWidget() {
  return (
    <div className="absolute top-[21px] left-[922px] flex h-[50px] w-[120px] items-center rounded-full bg-white pl-1.5 font-['Noto_Sans',sans-serif] text-[11px] text-[#555] shadow-md">
      <svg className="h-[38px] w-[38px]" viewBox="0 0 38 38" fill="none" stroke="#fff" strokeWidth="2.600" strokeLinecap="round" aria-hidden>
        <circle cx="19" cy="19" r="19" fill="#26c972" stroke="none" />
        <path d="M6.500 14.500c7-7.500 18-7.500 25 0M10.500 19c5-5 12-5 17 0M14.500 23.500c3-2.500 6-2.500 9 0" />
        <circle cx="19" cy="28.500" r="1.800" fill="#fff" stroke="none" />
      </svg>
      <div className="ml-1.5 flex flex-col gap-1">
        <span className="flex items-center gap-[5px] leading-4">
          <svg className="h-3 w-2.5" viewBox="0 0 10 12" strokeWidth="1.600" fill="none" aria-hidden>
            <path d="M3.500 0v11L.500 8" stroke="#26c972" />
            <path d="M6.500 12V1l3 3" stroke="#f08020" />
          </svg>
          0.00K/s
        </span>
        <span className="flex items-center gap-[5px] leading-4">
          <svg className="h-3 w-2.5" viewBox="0 0 10 12" fill="#26c972" aria-hidden>
            <path d="M1 2h1V0h2v2h5v10H1zM3 4v3h4V4z" fillRule="evenodd" />
          </svg>
          0
        </span>
      </div>
    </div>
  );
}

export default function App() {
  return (
    <div className={clsx('relative flex h-screen flex-col overflow-hidden bg-[#333]', uiFont)}>
      <TitleBar />
      <Toolbar />
      <div className="flex min-h-0 flex-1">
        <Sidebar />
        <Viewer />
      </div>
      <StatusBar />
      <Taskbar />
      <NetworkWidget />
      <div className="absolute -top-7 left-[1131px] flex h-[47px] w-[47px] items-end justify-center rounded-full border-2 border-[#e4e4e4] bg-[#3cc864] pb-0.5 font-['DejaVu_Sans',sans-serif] text-[11px] leading-4 font-bold text-white">
        77
      </div>
    </div>
  );
}
